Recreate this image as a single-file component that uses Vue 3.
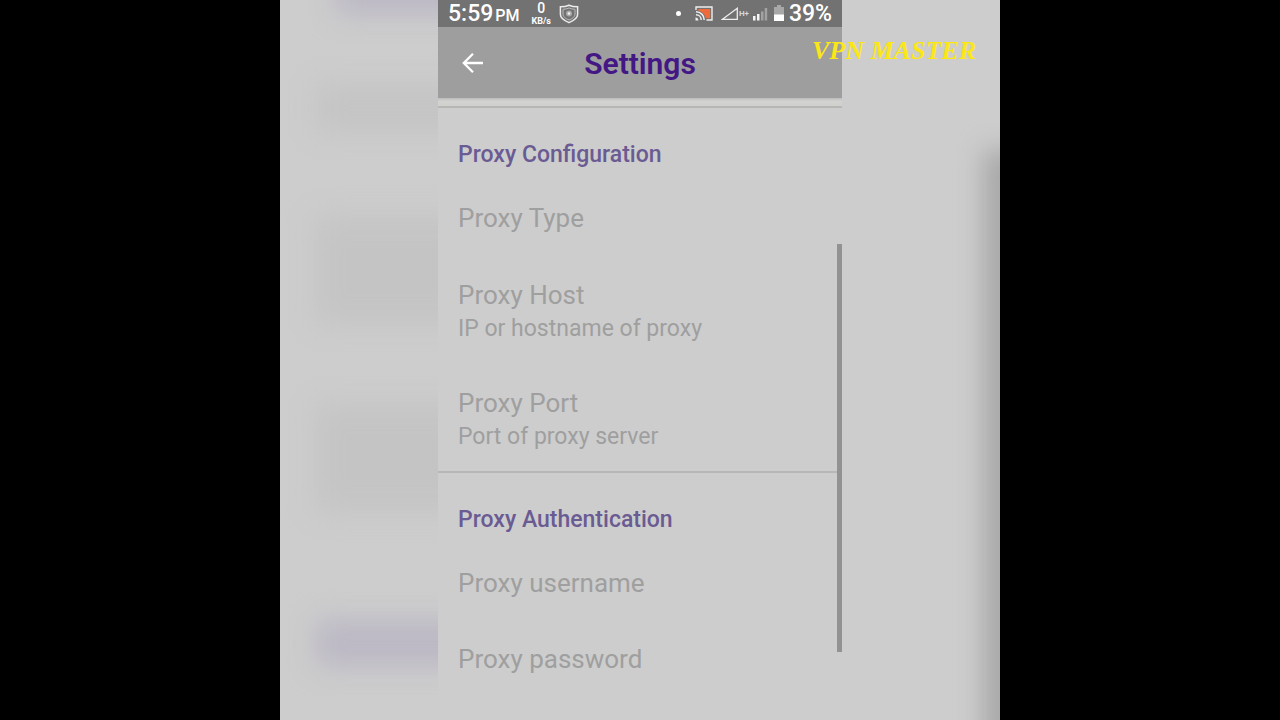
<script setup>
const sections = [
  {
    title: 'Proxy Configuration',
    items: [
      { label: 'Proxy Type' },
      { label: 'Proxy Host', hint: 'IP or hostname of proxy' },
      { label: 'Proxy Port', hint: 'Port of proxy server' },
    ],
  },
  {
    title: 'Proxy Authentication',
    items: [{ label: 'Proxy username' }, { label: 'Proxy password' }],
  },
]
</script>

<template>
  <div class="page">
    <div class="stage">
      <div class="backdrop" aria-hidden="true">
        <span class="smudge tint first"></span>
        <span class="smudge second"></span>
        <span class="smudge third"></span>
        <span class="smudge fourth"></span>
        <span class="smudge tint fifth"></span>
        <span class="edge"></span>
      </div>

      <main class="phone">
        <div class="status">
          <span class="clock">5:59</span>
          <span class="meridiem">PM</span>
          <span class="speed"><b>0</b><i>KB/s</i></span>
          <svg class="shield" width="20" height="20" viewBox="0 0 20 20" fill="none">
            <path d="M10 1.200c2.600 1.200 5.400 1.600 8.600 1.600v7.700c0 3.400-3.400 5.900-8.600 8.100C4.800 16.400 1.400 13.900 1.400 10.500V2.800c3.200 0 6-.4 8.600-1.600z" stroke="#ececec" stroke-width="1.500" />
            <path d="M10 4c2 .9 3.900 1.200 6 1.300V10c0 2.600-2.300 4.500-6 6-3.700-1.500-6-3.400-6-6V5.300C6.100 5.200 8 4.900 10 4z" stroke="#bdbdbd" stroke-width="1" />
            <circle cx="10" cy="9.500" r="3" fill="#a9a9a9" />
            <circle cx="10" cy="9.500" r="1.300" fill="#f0f0f0" />
          </svg>
          <span class="dot"></span>
          <svg class="cast" width="18" height="15" viewBox="0 0 18 15" fill="none">
            <path d="M3.500 3H15.200v9.300h-4.400C10 8.500 7.500 5.700 3.500 5z" fill="#ee6c3c" />
            <path d="M1 4V1h16v13h-5.500" stroke="#eee" stroke-width="1.400" />
            <path d="M1 5.800c4.700 0 8.200 3.500 8.200 8.200M1 8.800c3 0 5.200 2.200 5.200 5.200" stroke="#eee" stroke-width="1.500" />
            <path d="M.5 11.500c1.700 0 2.900 1.200 2.900 2.900H.5z" fill="#eee" />
          </svg>
          <svg class="signal" width="18" height="14" viewBox="0 0 18 14" fill="none">
            <path d="M1.500 12.300 16.300 1.300v11z" stroke="#ededed" stroke-width="1.300" />
          </svg>
          <span class="network">H+</span>
          <svg class="bars" width="16" height="14" viewBox="0 0 16 14">
            <path d="M1 9h2.500v4.500H1zM5 7h2.500v6.500H5z" fill="#f5f5f5" />
            <path d="M9 4.500h2.500v9H9zM12.700 1h2.500v12.500h-2.500z" fill="#a2a2a2" />
          </svg>
          <svg class="battery" width="10" height="17" viewBox="0 0 10 17">
            <path d="M3 0h4v2h3v8H0V2h3z" fill="#a8a8a8" />
            <path d="M0 9.500h10V16H0z" fill="#fff" />
          </svg>
          <span class="percent">39%</span>
        </div>

        <header class="bar">
          <button class="back" type="button" aria-label="Back">
            <svg width="22" height="22" viewBox="0 0 22 22" fill="none">
              <path d="M21 11H2.500M11 1.800 1.800 11l9.200 9.200" stroke="#fff" stroke-width="2.300" />
            </svg>
          </button>
          <h1>Settings</h1>
        </header>

        <div class="content">
          <section v-for="section in sections" :key="section.title">
            <h2>{{ section.title }}</h2>
            <div
              v-for="item in section.items"
              :key="item.label"
              class="item"
              :class="{ tall: item.hint }"
            >
              <span class="label">{{ item.label }}</span>
              <span v-if="item.hint" class="hint">{{ item.hint }}</span>
            </div>
          </section>
          <span class="thumb"></span>
        </div>
      </main>

      <div class="brand">VPN MASTER</div>
    </div>
  </div>
</template>

<style>
body {
  background: #000;
}
</style>

<style scoped>
.page {
  display: flex;
  justify-content: center;
  height: 100vh;
  background: #000;
  font-family: Roboto, "Liberation Sans", sans-serif;
}
.stage {
  position: relative;
  display: grid;
  grid-template-columns: 158px 1fr 158px;
  width: 56.25%;
  overflow: hidden;
  background: #cdcdcd;
}
.backdrop {
  position: absolute;
  inset: 0;
  overflow: hidden;
}
.smudge {
  position: absolute;
  left: 36px;
  width: 200px;
  background: #c4c4c4;
  filter: blur(14px);
}
.tint {
  background: #bbb7c4;
}
.first {
  top: -40px;
  left: 56px;
  height: 54px;
}
.second {
  top: 84px;
  height: 48px;
}
.third {
  top: 216px;
  height: 108px;
}
.fourth {
  top: 404px;
  height: 108px;
}
.fifth {
  top: 620px;
  height: 46px;
}
.edge {
  position: absolute;
  top: 150px;
  bottom: -40px;
  right: -20px;
  width: 36px;
  background: #a6a6a6;
  filter: blur(13px);
}
.phone {
  position: relative;
  grid-column: 2;
  display: flex;
  flex-direction: column;
  min-width: 0;
  min-height: 0;
  height: 100vh;
  background: #cdcdcd;
}
.status {
  display: flex;
  align-items: center;
  flex: none;
  box-sizing: border-box;
  height: 27px;
  padding: 0 10px;
  background: #727272;
  color: #fff;
}
.clock,
.percent {
  font-size: 23px;
  font-weight: 500;
  line-height: 26px;
}
.meridiem {
  margin-left: 2px;
  padding-top: 4px;
  font-size: 16px;
  font-weight: 500;
  line-height: 22px;
}
.speed {
  display: flex;
  flex-direction: column;
  align-items: center;
  margin-left: 12px;
}
.speed b {
  font-size: 14px;
  font-weight: 500;
  line-height: 15px;
}
.speed i {
  font-size: 9px;
  font-style: normal;
  font-weight: 700;
  line-height: 11px;
}
.shield {
  margin-left: 8px;
}
.dot {
  width: 5px;
  height: 5px;
  margin-left: auto;
  border-radius: 50%;
  background: #fff;
}
.cast {
  margin-left: 14px;
}
.signal {
  margin-left: 8px;
}
.network {
  font-size: 8px;
  font-weight: 700;
  line-height: 10px;
  color: #d8d8d8;
}
.bars {
  margin-left: 3px;
}
.battery {
  margin-left: 6px;
}
.percent {
  margin-left: 5px;
}
.bar {
  display: grid;
  grid-template-columns: 70px 1fr 70px;
  align-items: center;
  flex: none;
  height: 71px;
  background: #9e9e9e;
}
.back {
  display: flex;
  justify-content: center;
  padding: 0;
  border: 0;
  background: none;
}
h1 {
  margin: 0;
  padding-top: 2px;
  font-size: 30px;
  font-weight: 600;
  line-height: 36px;
  text-align: center;
  color: #431784;
}
.content {
  position: relative;
  flex: 1;
  min-height: 0;
  padding-top: 8px;
  overflow: hidden;
  background: linear-gradient(#bdbdbd, #d2d2d0 3px, #d0d0cd 8px, #cdcdcd 10px);
}
h2 {
  margin: 0;
  padding: 33px 20px 10px;
  border-top: 2px solid #b7b7b5;
  font-size: 23px;
  font-weight: 500;
  line-height: 28px;
  color: #6a5b93;
}
.item {
  display: flex;
  flex-direction: column;
  justify-content: center;
  box-sizing: border-box;
  height: 76px;
  padding: 2px 20px 0;
  color: #9f9f9f;
}
.tall {
  height: 108px;
  padding-top: 4px;
}
.label {
  font-size: 26px;
  line-height: 36px;
}
.hint {
  font-size: 23px;
  line-height: 32px;
}
.thumb {
  position: absolute;
  top: 146px;
  right: 0;
  width: 5px;
  height: 408px;
  background: #929292;
}
.brand {
  position: absolute;
  top: 36px;
  right: 24px;
  font-family: "Liberation Serif", serif;
  font-size: 26px;
  font-style: italic;
  font-weight: 700;
  line-height: 30px;
  white-space: nowrap;
  color: #fbe616;
}
</style>
